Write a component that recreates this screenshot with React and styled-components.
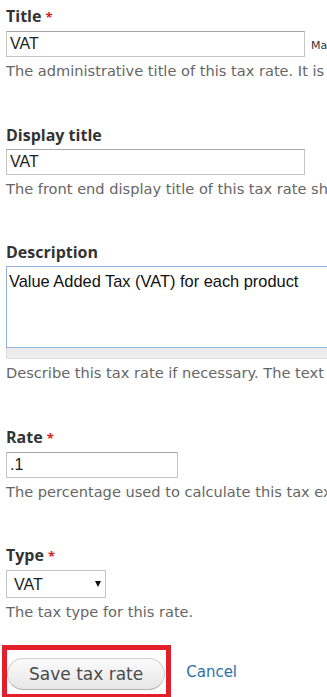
import styled, { createGlobalStyle } from "styled-components";

const GlobalStyle = createGlobalStyle`
    html, body {
        margin: 0;
        padding: 0;
        background: #fff;
        overflow: hidden;
    }
`;

const App = () => {
    return (
        <>
            <GlobalStyle />
            <Page>
                <FormItem>
                    <Label>Title <Required>*</Required></Label>
                    <InputRow>
                        <TextInput defaultValue="VAT" $width={299} />
                        <MachineName>Machine name: vat</MachineName>
                    </InputRow>
                    <Description>The administrative title of this tax rate. It is shown on the administration pages.</Description>
                </FormItem>

                <FormItem>
                    <Label>Display title</Label>
                    <TextInput defaultValue="VAT" $width={299} />
                    <Description>The front end display title of this tax rate shown to customers.</Description>
                </FormItem>

                <FormItem>
                    <Label>Description</Label>
                    <TextArea defaultValue="Value Added Tax (VAT) for each product" />
                    <Grippie />
                    <Description>Describe this tax rate if necessary. The text will only be shown in administrative areas.</Description>
                </FormItem>

                <FormItem>
                    <Label>Rate <Required>*</Required></Label>
                    <TextInput defaultValue=".1" $width={172} />
                    <Description>The percentage used to calculate this tax expressed as a decimal.</Description>
                </FormItem>

                <FormItem>
                    <Label>Type <Required>*</Required></Label>
                    <SelectWrap>
                        <Select defaultValue="vat">
                            <option value="vat">VAT</option>
                        </Select>
                        <SelectArrow />
                    </SelectWrap>
                    <Description>The tax type for this rate.</Description>
                </FormItem>

                <Actions>
                    <Highlight>
                        <SubmitButton type="button">Save tax rate</SubmitButton>
                    </Highlight>
                    <CancelLink href="#">Cancel</CancelLink>
                </Actions>
            </Page>
        </>
    );
};

const Page = styled.div`
    width: 327px;
    height: 697px;
    overflow: hidden;
    padding: 6px 0 0 6px;
    box-sizing: border-box;
`;

const FormItem = styled.div`
    margin-bottom: 43.5px;
`;

const Label = styled.label`
    display: block;
    font-family: "Open Sans", "Liberation Sans", sans-serif;
    font-weight: 700;
    font-size: 16px;
    line-height: 20px;
    color: #333;
    margin-bottom: 4px;
`;

const Required = styled.span`
    color: #d42020;
    font-size: 13px;
`;

const InputRow = styled.div`
    display: flex;
    align-items: center;
    gap: 6px;
    white-space: nowrap;
`;

const TextInput = styled.input`
    box-sizing: border-box;
    width: ${(props) => props.$width}px;
    flex: none;
    height: 26px;
    margin: 0;
    padding: 0 3px;
    border: 1px solid #c4c4c4;
    border-top-color: #a8a8a8;
    font-family: "Liberation Sans", Arial, sans-serif;
    font-size: 16px;
    color: #222;
    outline: none;
    display: block;
`;

const MachineName = styled.span`
    font-family: "DejaVu Sans", Verdana, sans-serif;
    font-size: 11px;
    color: #333;
    padding-top: 3px;
`;

const Description = styled.div`
    margin-top: 4px;
    font-family: "DejaVu Sans", Verdana, sans-serif;
    font-size: 14.6px;
    line-height: 20px;
    color: #666;
    white-space: nowrap;
`;

const TextArea = styled.textarea`
    display: block;
    box-sizing: border-box;
    width: 420px;
    height: 82px;
    margin: 0;
    padding: 4px 2px;
    border: 1px solid #93b2dc;
    font-family: "Liberation Sans", Arial, sans-serif;
    font-size: 16.4px;
    line-height: 20px;
    color: #111;
    resize: none;
    outline: none;
`;

const Grippie = styled.div`
    box-sizing: border-box;
    width: 420px;
    height: 11px;
    background: #ececec;
    border: 1px solid #dcdcdc;
    border-top: none;
`;

const SelectWrap = styled.div`
    position: relative;
    width: 100px;
    height: 28px;
`;

const Select = styled.select`
    appearance: none;
    box-sizing: border-box;
    width: 100%;
    height: 100%;
    margin: 0;
    padding: 0 0 0 7px;
    border: 1px solid #c4c4c4;
    border-radius: 0;
    background: #fff;
    font-family: "Liberation Sans", Arial, sans-serif;
    font-size: 16px;
    color: #222;
    outline: none;
`;

const SelectArrow = styled.span`
    position: absolute;
    left: 89px;
    top: 11px;
    width: 0;
    height: 0;
    border-left: 3px solid transparent;
    border-right: 3px solid transparent;
    border-top: 6px solid #111;
    pointer-events: none;
`;

const Actions = styled.div`
    display: flex;
    align-items: center;
    margin-top: -20.5px;
`;

const Highlight = styled.div`
    margin-left: -4px;
    padding: 8px 1px 4px 0;
    border: 5px solid #e2202b;
`;

const SubmitButton = styled.button`
    display: block;
    box-sizing: border-box;
    height: 32px;
    margin: 0;
    padding: 0 21px;
    border: 1px solid #cfcfcf;
    border-bottom-color: #b4b4b4;
    border-radius: 20px;
    background: linear-gradient(to bottom, #fbfbfb, #e6e6e6);
    font-family: "DejaVu Sans", Verdana, sans-serif;
    font-size: 17px;
    color: #4a4a4a;
    cursor: pointer;
`;

const CancelLink = styled.a`
    margin-left: 15px;
    font-family: "DejaVu Sans", Verdana, sans-serif;
    font-size: 15px;
    color: #2f6fa7;
    text-decoration: none;
`;

export default App;
